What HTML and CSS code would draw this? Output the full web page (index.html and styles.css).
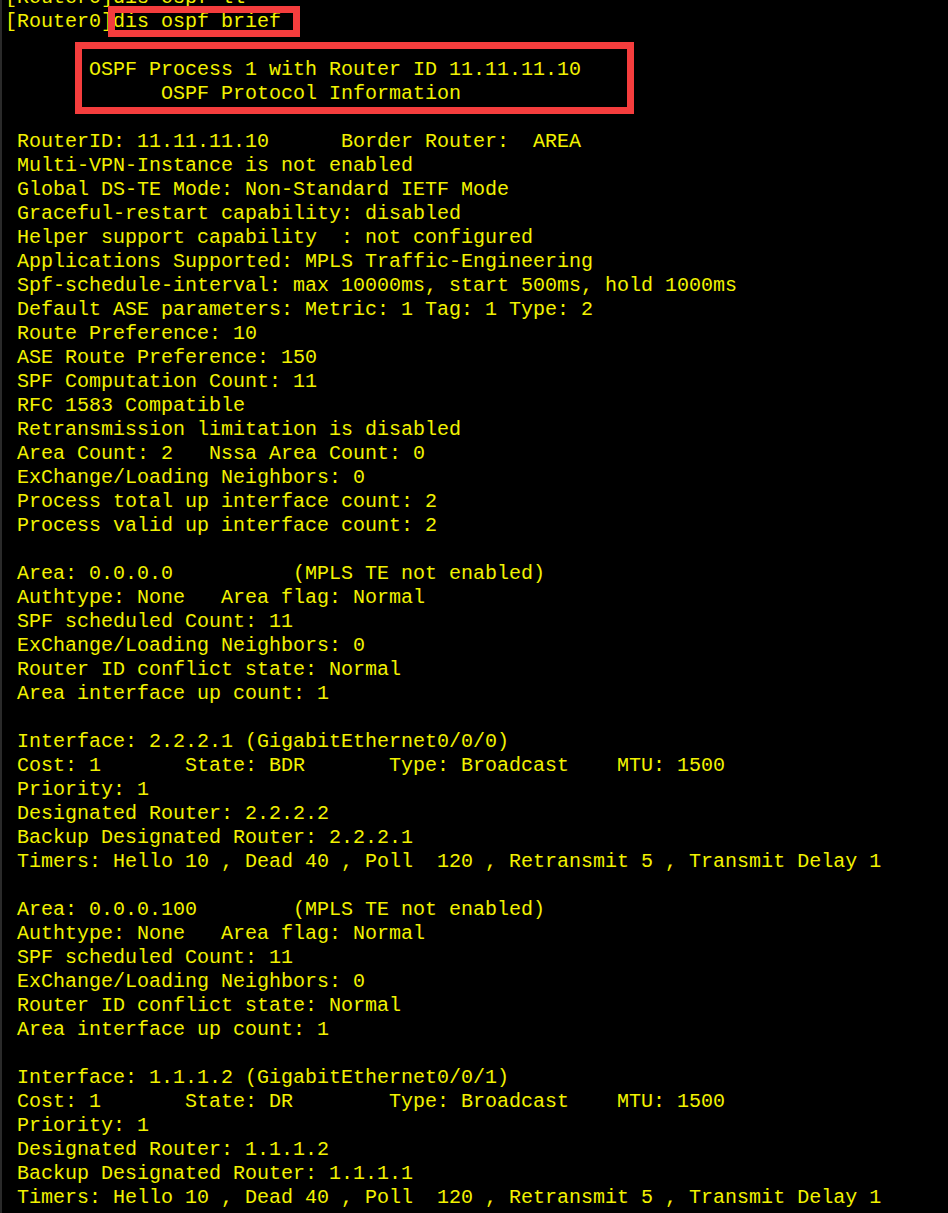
FILE: index.html
```html
<!DOCTYPE html>
<html lang="en">
<head>
<meta charset="utf-8">
<title>dis ospf brief</title>
<link rel="stylesheet" href="styles.css">
</head>
<body>
<div class="terminal">
<pre class="output">[Router0]dis ospf ll
[Router0]dis ospf brief

       OSPF Process 1 with Router ID 11.11.11.10
             OSPF Protocol Information

 RouterID: 11.11.11.10      Border Router:  AREA
 Multi-VPN-Instance is not enabled
 Global DS-TE Mode: Non-Standard IETF Mode
 Graceful-restart capability: disabled
 Helper support capability  : not configured
 Applications Supported: MPLS Traffic-Engineering
 Spf-schedule-interval: max 10000ms, start 500ms, hold 1000ms
 Default ASE parameters: Metric: 1 Tag: 1 Type: 2
 Route Preference: 10
 ASE Route Preference: 150
 SPF Computation Count: 11
 RFC 1583 Compatible
 Retransmission limitation is disabled
 Area Count: 2   Nssa Area Count: 0
 ExChange/Loading Neighbors: 0
 Process total up interface count: 2
 Process valid up interface count: 2

 Area: 0.0.0.0          (MPLS TE not enabled)
 Authtype: None   Area flag: Normal
 SPF scheduled Count: 11
 ExChange/Loading Neighbors: 0
 Router ID conflict state: Normal
 Area interface up count: 1

 Interface: 2.2.2.1 (GigabitEthernet0/0/0)
 Cost: 1       State: BDR       Type: Broadcast    MTU: 1500
 Priority: 1
 Designated Router: 2.2.2.2
 Backup Designated Router: 2.2.2.1
 Timers: Hello 10 , Dead 40 , Poll  120 , Retransmit 5 , Transmit Delay 1

 Area: 0.0.0.100        (MPLS TE not enabled)
 Authtype: None   Area flag: Normal
 SPF scheduled Count: 11
 ExChange/Loading Neighbors: 0
 Router ID conflict state: Normal
 Area interface up count: 1

 Interface: 1.1.1.2 (GigabitEthernet0/0/1)
 Cost: 1       State: DR        Type: Broadcast    MTU: 1500
 Priority: 1
 Designated Router: 1.1.1.2
 Backup Designated Router: 1.1.1.1
 Timers: Hello 10 , Dead 40 , Poll  120 , Retransmit 5 , Transmit Delay 1
</pre>
<div class="mark mark-cmd"></div>
<div class="mark mark-head"></div>
</div>
</body>
</html>
```

FILE: styles.css
```css
html, body {
  margin: 0;
  padding: 0;
  background: #000;
}

.terminal {
  position: relative;
  height: 1213px;
  overflow: hidden;
  background: #000;
  border-left: 2px solid #2a2a2a;
  box-sizing: border-box;
}

.output {
  margin: -14px 0 0 3px;
  font-family: "Liberation Mono", "DejaVu Sans Mono", monospace;
  font-size: 20px;
  line-height: 24px;
  color: #f2f200;
  white-space: pre;
}

.mark {
  position: absolute;
  border: 7px solid #f53d3d;
  box-sizing: border-box;
}

.mark-cmd {
  left: 106px;
  top: 6px;
  width: 192px;
  height: 31px;
}

.mark-head {
  left: 73px;
  top: 42px;
  width: 559px;
  height: 72px;
}
```
